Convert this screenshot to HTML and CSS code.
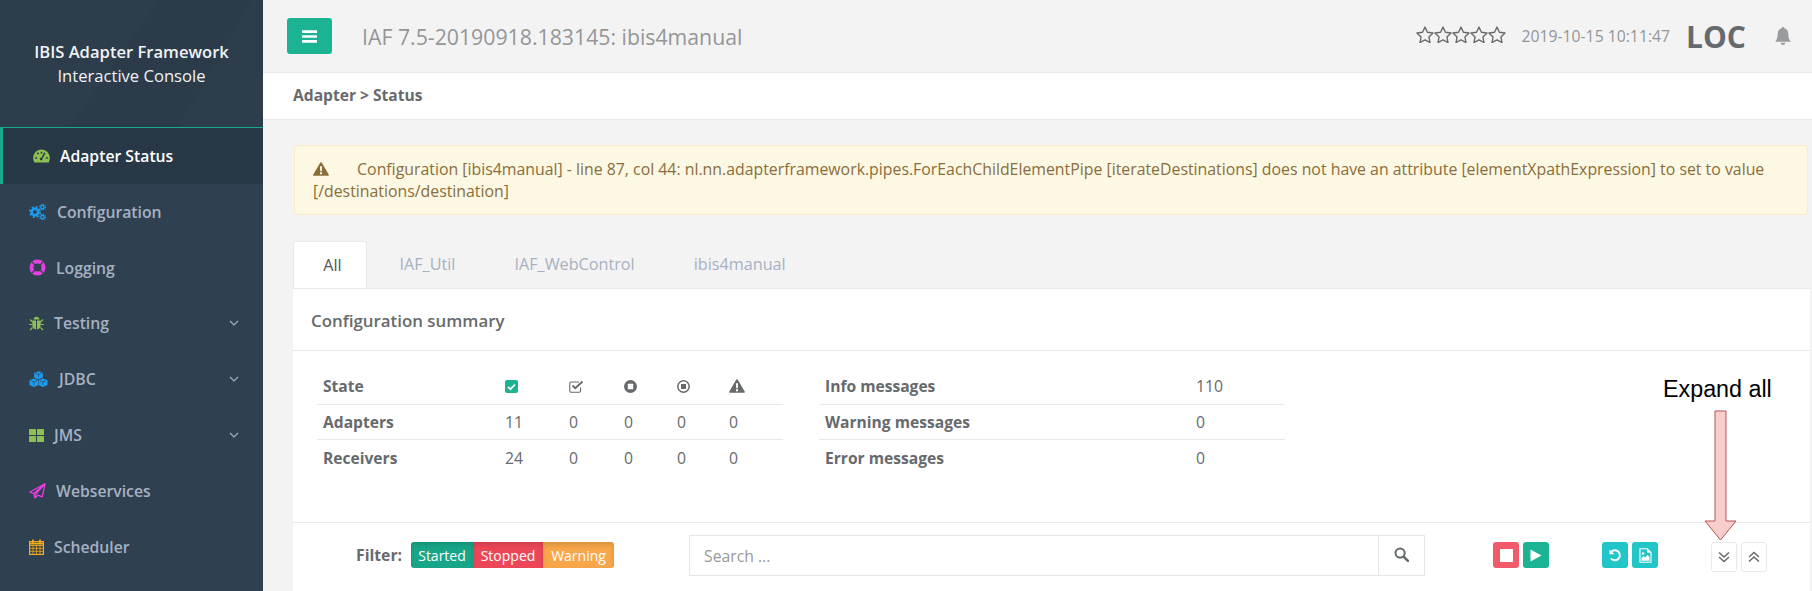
FILE: index.html
```html
<!DOCTYPE html>
<html lang="en">
<head>
  <meta charset="UTF-8" />
  <title>IAF 7.5-20190918.183145: ibis4manual</title>
  <link rel="stylesheet" href="styles.css">
</head>
<body>

  <nav class="sidebar">
    <div class="brand">
      <strong>IBIS Adapter Framework</strong>
      <span>Interactive Console</span>
    </div>
    <a class="nav-item active">
      <svg class="icon" width="17" height="14" viewBox="0 0 17 14"><path fill="#8cc152" fill-rule="evenodd" d="M8.5 0.5C3.8 0.5 0.2 4.2 0.2 9c0 1.7 0.4 3.100 1.100 4.500h14.400c0.700-1.400 1.100-2.800 1.100-4.500 0-4.800-3.600-8.500-8.300-8.500zM7.700 2.800h1.600v1.800H7.700zM3.800 4.300l1.300-1 1 1.400-1.300 1zM2.200 8.300h1.900v1.500H2.200zM12.900 8.300h1.900v1.500h-1.900zM11.200 3.300l1.300 1-3 5.200c0.300 0.900-0.300 1.900-1.300 1.900-1.200 0-1.800-1.400-1-2.300 0.400-0.400 0.800-0.500 1.200-0.400z"/></svg>
      Adapter Status
    </a>
    <a class="nav-item">
      <svg class="icon" width="17" height="16" viewBox="0 0 17 16"><g fill="none" stroke="#1c9cf0"><circle cx="6" cy="8" r="3.200" stroke-width="2.600"/><circle cx="6" cy="8" r="5" stroke-width="2" stroke-dasharray="2 1.930"/><circle cx="13.500" cy="3" r="1.700" stroke-width="1.300"/><circle cx="13.500" cy="3" r="2.800" stroke-width="1.200" stroke-dasharray="1.200 1"/><circle cx="13.500" cy="13" r="1.700" stroke-width="1.300"/><circle cx="13.500" cy="13" r="2.800" stroke-width="1.200" stroke-dasharray="1.200 1"/></g></svg>
      <span class="nudge">Configuration</span>
    </a>
    <a class="nav-item">
      <svg class="icon" width="17" height="17" viewBox="0 0 17 17"><circle cx="8.500" cy="8.500" r="6" fill="none" stroke="#e83fe0" stroke-width="4"/><g stroke="#2f4050" stroke-width="1.100"><path d="M3 3l3 3M14 3l-3 3M3 14l3-3M14 14l-3-3"/></g></svg>
      Logging
    </a>
    <a class="nav-item has-arrow">
      <svg class="icon" width="15" height="15" viewBox="0 0 15 15"><g fill="#8cc152"><path d="M4.500 3.500C4.700 1.800 6 0.800 7.500 0.800s2.800 1 3 2.700z"/><path d="M3.300 4.500h3.700v9C5 13.400 3.300 11.500 3.300 9zM8 4.500h3.700V9c0 2.500-1.700 4.400-3.700 4.500z"/></g><path stroke="#8cc152" stroke-width="1.200" fill="none" d="M3.500 6L1 3.500M11.500 6L14 3.500M3 8.500H0.200M12 8.500h2.800M3.500 11.500L1 14M11.500 11.500L14 14"/></svg>
      Testing
      <svg class="chevron" width="10" height="6" viewBox="0 0 10 6"><path d="M1 1l4 4 4-4" fill="none" stroke="#a7b1c2" stroke-width="1.200"/></svg>
    </a>
    <a class="nav-item has-arrow">
      <svg class="icon" width="19" height="16" viewBox="0 0 19 16"><g fill="#1c9cf0"><path d="M9.500 0.200l4.300 1.700v4.600l-4.300 1.900-4.300-1.900V1.900z"/><path d="M5 7.500l4.200 1.700v5l-4.200 1.700-4.500-1.800V9.200z"/><path d="M14 7.500l4.500 1.700v4.900L14 15.900l-4.200-1.700v-5z"/></g><g stroke="#2f4050" stroke-width="0.700" fill="none"><path d="M6.500 2.200l3 1.200 3-1.200M9.500 3.400v2.800M2 9.800l3 1.200 2.800-1.200M5 11v3M11 9.800l3 1.200 3-1.200M14 11v3"/></g></svg>
      <span class="nudge">JDBC</span>
      <svg class="chevron" width="10" height="6" viewBox="0 0 10 6"><path d="M1 1l4 4 4-4" fill="none" stroke="#a7b1c2" stroke-width="1.200"/></svg>
    </a>
    <a class="nav-item has-arrow">
      <svg class="icon" width="15" height="13" viewBox="0 0 15 13"><g fill="#8cc152"><rect width="7" height="6" rx="0.600"/><rect x="8" width="7" height="6" rx="0.600"/><rect y="7" width="7" height="6" rx="0.600"/><rect x="8" y="7" width="7" height="6" rx="0.600"/></g></svg>
      JMS
      <svg class="chevron" width="10" height="6" viewBox="0 0 10 6"><path d="M1 1l4 4 4-4" fill="none" stroke="#a7b1c2" stroke-width="1.200"/></svg>
    </a>
    <a class="nav-item">
      <svg class="icon" width="17" height="16" viewBox="0 0 17 16"><g fill="none" stroke="#e83fe0" stroke-width="1.300" stroke-linejoin="round"><path d="M16 0.800L0.800 9l4 1.600 1.300 4.400 2.600-2.800 4.500 1.600z"/><path d="M16 0.800L4.800 10.600M16 0.800L6.500 11.300v3.200"/></g></svg>
      Webservices
    </a>
    <a class="nav-item">
      <svg class="icon" width="15" height="16" viewBox="0 0 15 16"><g fill="none" stroke="#f8ac1a"><rect x="0.600" y="2.600" width="13.800" height="12.800" stroke-width="1.200"/><path stroke-width="0.800" d="M1 6.500h13M1 9.300h13M1 12.300h13M4 6v9M7.500 6v9M11 6v9"/><path stroke-width="1.700" d="M4 0.500v3.500M11 0.500v3.500M1 4.700h13"/></g></svg>
      Scheduler
    </a>
  </nav>

  <div class="main">
    <header class="topbar">
      <button class="menu-btn" type="button">
        <svg width="15" height="13" viewBox="0 0 15 13"><path fill="#fff" d="M0 0.300h15v2.600H0zM0 5.200h15v2.600H0zM0 10.100h15v2.600H0z"/></svg>
      </button>
      <h1>IAF 7.5-20190918.183145: ibis4manual</h1>
      <div class="top-right">
        <span class="stars">
          <svg width="18" height="17" viewBox="0.500 0.500 17 16"><path fill="none" stroke="#676a6c" stroke-width="1.300" stroke-linejoin="round" d="M9 1.500l2.300 4.900 5.300 0.700-3.900 3.700 1 5.300L9 13.500l-4.700 2.600 1-5.300-3.900-3.700 5.300-0.700z"/></svg>
          <svg width="18" height="17" viewBox="0.500 0.500 17 16"><path fill="none" stroke="#676a6c" stroke-width="1.300" stroke-linejoin="round" d="M9 1.500l2.300 4.900 5.300 0.700-3.900 3.700 1 5.300L9 13.500l-4.700 2.600 1-5.300-3.900-3.700 5.300-0.700z"/></svg>
          <svg width="18" height="17" viewBox="0.500 0.500 17 16"><path fill="none" stroke="#676a6c" stroke-width="1.300" stroke-linejoin="round" d="M9 1.500l2.300 4.900 5.300 0.700-3.900 3.700 1 5.300L9 13.500l-4.700 2.600 1-5.300-3.900-3.700 5.300-0.700z"/></svg>
          <svg width="18" height="17" viewBox="0.500 0.500 17 16"><path fill="none" stroke="#676a6c" stroke-width="1.300" stroke-linejoin="round" d="M9 1.500l2.300 4.900 5.300 0.700-3.900 3.700 1 5.300L9 13.500l-4.700 2.600 1-5.300-3.900-3.700 5.300-0.700z"/></svg>
          <svg width="18" height="17" viewBox="0.500 0.500 17 16"><path fill="none" stroke="#676a6c" stroke-width="1.300" stroke-linejoin="round" d="M9 1.500l2.300 4.900 5.300 0.700-3.900 3.700 1 5.300L9 13.500l-4.700 2.600 1-5.300-3.900-3.700 5.300-0.700z"/></svg>
        </span>
        <span class="clock">2019-10-15 10:11:47</span>
        <span class="dtap">LOC</span>
        <svg class="bell" width="16" height="18" viewBox="1 0.500 14 16"><path fill="#999c9e" d="M8 0.500c0.700 0 1.200 0.500 1.200 1.200 2.300 0.500 3.500 2.400 3.500 4.800 0 3.500 0.800 5.500 2.300 7H1c1.500-1.500 2.300-3.500 2.300-7 0-2.400 1.200-4.300 3.500-4.800 0-0.700 0.500-1.200 1.200-1.200zM6 14.500h4c0 1.200-0.900 2-2 2s-2-0.800-2-2z"/></svg>
      </div>
    </header>

    <div class="breadcrumb">Adapter &gt; Status</div>

    <div class="content">
      <div class="alert">
        <svg class="alert-icon" width="16" height="14" viewBox="0 0 16 14"><path fill="#8a6d3b" fill-rule="evenodd" d="M8 0.300c0.500 0 0.800 0.300 1 0.600l6.700 11.500c0.400 0.700-0.100 1.400-0.900 1.400H1.200c-0.800 0-1.300-0.700-0.900-1.400L7 0.900c0.200-0.300 0.500-0.600 1-0.600zM6.900 4.300l0.300 5h1.600l0.300-5zM7 10.300v2h2v-2z"/></svg>
        Configuration [ibis4manual] - line 87, col 44: nl.nn.adapterframework.pipes.ForEachChildElementPipe [iterateDestinations] does not have an attribute [elementXpathExpression] to set to value [/destinations/destination]
      </div>

      <ul class="tabs">
        <li class="tab active">All</li>
        <li class="tab">IAF_Util</li>
        <li class="tab">IAF_WebControl</li>
        <li class="tab">ibis4manual</li>
      </ul>

      <section class="panel">
        <h5 class="panel-title">Configuration summary</h5>
        <div class="summary">
          <table class="state-table">
            <tr>
              <th>State</th>
              <td><svg width="13" height="13" viewBox="0 0 13 13"><rect width="13" height="13" rx="2" fill="#1ab394"/><path d="M3 6.800l2.500 2.400L10 4.500" fill="none" stroke="#fff" stroke-width="1.800"/></svg></td>
              <td><svg width="15" height="13" viewBox="0 0 15 13"><path d="M11.500 7.500V11a1.200 1.200 0 0 1-1.200 1.200H2A1.200 1.200 0 0 1 0.800 11V3.200A1.200 1.200 0 0 1 2 2h8" fill="none" stroke="#676a6c" stroke-width="1.100"/><path d="M3.500 5.500l2.800 2.800L13.500 1.500" fill="none" stroke="#676a6c" stroke-width="1.900"/></svg></td>
              <td><svg width="13" height="13" viewBox="0 0 13 13"><circle cx="6.500" cy="6.500" r="6.500" fill="#676a6c"/><rect x="3.800" y="3.800" width="5.400" height="5.400" rx="0.500" fill="#fff"/></svg></td>
              <td><svg width="13" height="13" viewBox="0 0 13 13"><circle cx="6.500" cy="6.500" r="5.700" fill="none" stroke="#676a6c" stroke-width="1.500"/><rect x="4" y="4" width="5" height="5" fill="#676a6c"/></svg></td>
              <td><svg width="16" height="14" viewBox="0 0 16 14"><path fill="#676a6c" fill-rule="evenodd" d="M8 0.300c0.500 0 0.800 0.300 1 0.600l6.700 11.500c0.400 0.700-0.100 1.400-0.900 1.400H1.200c-0.800 0-1.300-0.700-0.900-1.400L7 0.900c0.200-0.300 0.500-0.600 1-0.600zM6.900 4.300l0.300 5h1.600l0.300-5zM7 10.300v2h2v-2z"/></svg></td>
            </tr>
            <tr><th>Adapters</th><td>11</td><td>0</td><td>0</td><td>0</td><td>0</td></tr>
            <tr><th>Receivers</th><td>24</td><td>0</td><td>0</td><td>0</td><td>0</td></tr>
          </table>
          <table class="message-table">
            <tr><th>Info messages</th><td>110</td></tr>
            <tr><th>Warning messages</th><td>0</td></tr>
            <tr><th>Error messages</th><td>0</td></tr>
          </table>
        </div>

        <div class="toolbar">
          <strong class="filter-label">Filter:</strong>
          <div class="filters">
            <span class="filter started">Started</span>
            <span class="filter stopped">Stopped</span>
            <span class="filter warning">Warning</span>
          </div>
          <div class="search">
            <input type="text" placeholder="Search ..." />
            <button type="button">
              <svg width="15" height="15" viewBox="0 0 14 14"><circle cx="5.700" cy="5.700" r="4.300" fill="none" stroke="#676a6c" stroke-width="1.900"/><path d="M9 9l4 4" stroke="#676a6c" stroke-width="2.400" stroke-linecap="round"/></svg>
            </button>
          </div>
          <div class="btn-group actions-run">
            <button class="btn red" type="button"><svg width="13" height="13" viewBox="0 0 13 13"><rect width="13" height="13" fill="#fff"/></svg></button>
            <button class="btn green" type="button"><svg width="12" height="13" viewBox="0 0 12 13"><path d="M0.500 0.500L11.500 6.500L0.500 12.500z" fill="#fff"/></svg></button>
          </div>
          <div class="btn-group actions-reload">
            <button class="btn teal" type="button"><svg width="13" height="13" viewBox="0 0 13 13"><path d="M2.200 2.800A5 5 0 1 1 2 9.500" fill="none" stroke="#fff" stroke-width="1.900"/><path d="M0.500 0.500L5.500 5.200H0.500z" fill="#fff"/></svg></button>
            <button class="btn teal" type="button"><svg width="13" height="15" viewBox="0 0 13 15"><path fill="none" stroke="#fff" stroke-width="1.100" d="M1 0.800h7.200L12 4.500v9.700H1z"/><path fill="#fff" d="M8 0.800V4.800h4zM2.500 12.800V10l2-2 1.500 1.500L8.500 7l2 2v3.800z"/><circle cx="4" cy="5.500" r="1.300" fill="#fff"/></svg></button>
          </div>
          <div class="btn-group actions-collapse">
            <button class="btn outline" type="button"><svg width="12" height="12" viewBox="0 0 12 12"><path d="M1 1.500l5 4.500 5-4.500M1 6l5 4.500L11 6" fill="none" stroke="#676a6c" stroke-width="1.500"/></svg></button>
            <button class="btn outline" type="button"><svg width="12" height="12" viewBox="0 0 12 12"><path d="M1 6l5-4.500L11 6M1 10.500L6 6l5 4.500" fill="none" stroke="#676a6c" stroke-width="1.500"/></svg></button>
          </div>
        </div>
      </section>
    </div>

    <!-- annotation drawn over the screenshot -->
    <div class="note">Expand all</div>
    <svg class="note-arrow" width="34" height="132" viewBox="0 0 34 132"><path d="M11 1h11v110h10L16.500 130 1 111h10z" fill="#f8cecc" stroke="#b85450"/></svg>
  </div>

</body>
</html>
```
FILE: styles.css
```css
* {
  box-sizing: border-box;
}

html,
body {
  height: 100%;
}

body {
  margin: 0;
  display: flex;
  overflow: hidden;
  font-family: "Open Sans", sans-serif;
  font-size: 15.75px;
  color: #676a6c;
  background-color: #f3f3f4;
}

.sidebar {
  width: 263px;
  flex-shrink: 0;
  background-color: #2f4050;
  font-weight: 600;
}

.brand {
  height: 127px;
  padding-top: 41px;
  display: flex;
  flex-direction: column;
  align-items: center;
  gap: 3px;
  color: #f1f3f5;
  font-size: 16.6px;
  line-height: 21px;
  background:
    linear-gradient(125deg, rgba(255, 255, 255, 0.012) 45%, transparent 45%),
    linear-gradient(300deg, rgba(255, 255, 255, 0.012) 25%, transparent 25%),
    #2b3b4a;
}

.brand strong {
  font-weight: 600;
}

.brand span {
  font-weight: 400;
}

.nav-item {
  height: 55.8px;
  padding-left: 29px;
  display: flex;
  align-items: center;
  gap: 10px;
  color: #a7b1c2;
}

.nav-item .nudge {
  margin-left: 1px;
}

.nav-item.active {
  height: 57px;
  padding-left: 30px;
  color: #fff;
  background-color: #293846;
  border-left: 3px solid #19aa8d;
  border-top: 1px solid #19aa8d;
}

.chevron {
  margin-left: auto;
  margin-right: 24px;
}

.main {
  flex: 1;
  min-width: 0;
  position: relative;
}

.topbar {
  height: 73px;
  padding: 18px 0 0 24px;
  display: flex;
  align-items: flex-start;
  border-bottom: 1px solid #e7eaec;
}

.menu-btn {
  width: 45px;
  height: 36px;
  border: none;
  border-radius: 3px;
  background-color: #1ab394;
}

.menu-btn svg {
  display: block;
  margin: 0 auto;
}

.topbar h1 {
  margin: 0 0 0 30px;
  font-size: 21.27px;
  font-weight: 400;
  line-height: 38px;
  color: #949698;
}

.top-right {
  margin-left: auto;
  height: 36px;
  display: flex;
  align-items: center;
}

.stars {
  display: flex;
  margin-bottom: 4px;
}

.clock {
  margin-left: 15px;
  color: #949698;
}

.dtap {
  margin-left: 16px;
  font-size: 30px;
  font-weight: 700;
}

.bell {
  margin-left: 29px;
  margin-right: 21px;
}

.breadcrumb {
  height: 47px;
  padding-left: 30px;
  background-color: #fff;
  border-bottom: 1px solid #e7eaec;
  font-size: 15.6px;
  font-weight: 700;
  line-height: 45px;
}

.content {
  padding: 25px 2px 0 31px;
}

.alert {
  width: 1514px;
  height: 70px;
  padding: 12px 15px 0 18px;
  background-color: #fcf8e3;
  border: 1px solid #faebcc;
  border-radius: 3px;
  color: #8a6d3b;
  font-size: 15.85px;
  line-height: 22px;
}

.alert-icon {
  margin-right: 24px;
  vertical-align: -1px;
}

.tabs {
  list-style: none;
  margin: 26px 0 0 -1px;
  padding: 0;
  display: flex;
  font-size: 16.2px;
  font-weight: 400;
}

.tab {
  height: 47px;
  padding: 0 29.5px;
  line-height: 46px;
  color: #a7b1c2;
}

.tab.active {
  width: 74px;
  margin-right: 3px;
  padding: 0 0 0 5px;
  text-align: center;
  color: #555;
  background-color: #fff;
  border: 1px solid #e7eaec;
  border-bottom: none;
  border-radius: 3px 3px 0 0;
}

.panel {
  margin-left: -1px;
  background-color: #fff;
  border-top: 1px solid #e7eaec;
}

.panel-title {
  margin: 0;
  height: 62px;
  padding: 3px 0 0 18px;
  font-size: 16.875px;
  font-weight: 600;
  line-height: 58px;
  border-bottom: 1px solid #e7eaec;
}

.summary {
  height: 171px;
  padding: 18px 0 0 24px;
  display: flex;
  gap: 36px;
}

table {
  border-collapse: collapse;
  width: 466px;
  height: 106px;
}

th {
  text-align: left;
  font-size: 15.6px;
  font-weight: 700;
  padding: 0 6px;
}

td {
  padding: 0;
  font-weight: 400;
}

tr + tr th,
tr + tr td {
  border-top: 1px solid #e7eaec;
}

.state-table th {
  width: 188px;
}

.state-table td svg {
  display: block;
}

.state-table td:nth-of-type(1) {
  width: 64px;
}

.state-table td:nth-of-type(2) {
  width: 55px;
}

.state-table td:nth-of-type(3) {
  width: 53px;
}

.state-table td:nth-of-type(4) {
  width: 52px;
}

.message-table th {
  width: 377px;
}

.toolbar {
  height: 72px;
  padding: 12px 0 0 63px;
  display: flex;
  align-items: flex-start;
  border-top: 1px solid #e7eaec;
}

.filter-label {
  width: 55px;
  line-height: 40px;
}

.filters {
  width: 203px;
  margin-top: 7px;
  display: flex;
  border-radius: 3px;
  overflow: hidden;
}

.filter {
  height: 26px;
  flex: 1 0 auto;
  text-align: center;
  font-size: 14px;
  line-height: 27px;
  color: #fff;
  box-shadow: inset 0 3px 5px rgba(0, 0, 0, 0.125);
}

.filter.started {
  flex-basis: 62px;
  background-color: #18a689;
}

.filter.stopped {
  flex-basis: 70px;
  background-color: #ec4758;
}

.filter.warning {
  flex-basis: 71px;
  background-color: #f8a64a;
}

.search {
  margin-left: 75px;
  width: 736px;
  height: 41px;
  display: flex;
  border: 1px solid #e5e6e7;
}

.search input {
  flex: 1;
  min-width: 0;
  padding: 0 14px;
  border: none;
  outline: none;
  font: inherit;
}

.search input::placeholder {
  color: #999;
}

.search button {
  width: 46px;
  background-color: #fff;
  border: none;
  border-left: 1px solid #e5e6e7;
}

.btn-group {
  display: flex;
  gap: 4px;
  margin-top: 7px;
}

.actions-run {
  margin-left: 68px;
}

.actions-reload {
  margin-left: 53px;
}

.actions-collapse {
  margin-left: 53px;
}

.btn {
  width: 26px;
  height: 26px;
  padding: 0;
  display: flex;
  align-items: center;
  justify-content: center;
  border: none;
  border-radius: 3px;
}

.btn.red {
  background-color: #f05a6b;
}

.btn.green {
  background-color: #1ab394;
}

.btn.teal {
  background-color: #23c6c8;
}

.btn.outline {
  height: 30px;
  background-color: #fff;
  border: 1px solid #e7eaec;
}

.note {
  position: absolute;
  left: 1400px;
  top: 374px;
  font-family: "Liberation Sans", sans-serif;
  font-size: 23.3px;
  line-height: 30px;
  color: #000;
}

.note-arrow {
  position: absolute;
  left: 1441px;
  top: 410px;
}
```
